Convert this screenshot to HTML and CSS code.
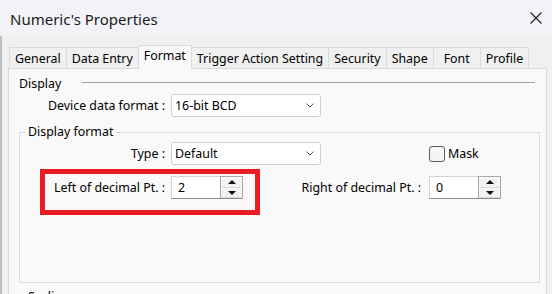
FILE: index.html
```html
<!DOCTYPE html>
<html>
<head>
    <title>Numeric's Properties</title>
    <link rel="stylesheet" href="styles.css">
</head>
<body>
    <div class="titlebar">
        <span class="title">Numeric's Properties</span>
        <svg class="close" width="12" height="12" viewBox="0 0 12 12">
            <path d="M0.5 0.5 L11.5 11.5 M11.5 0.5 L0.5 11.5" stroke="#1a1a1a" stroke-width="1.1" fill="none"/>
        </svg>
    </div>
    <div class="dialog">
        <div class="tabs">
            <div class="tab">General</div>
            <div class="tab">Data Entry</div>
            <div class="tab active">Format</div>
            <div class="tab">Trigger Action Setting</div>
            <div class="tab">Security</div>
            <div class="tab">Shape</div>
            <div class="tab">Font</div>
            <div class="tab">Profile</div>
        </div>
        <div class="panel">
            <div class="section-head">
                <span>Display</span>
                <span class="rule"></span>
            </div>
            <div class="row device-row">
                <label class="lbl">Device data format :</label>
                <div class="select">
                    <span>16-bit BCD</span>
                    <svg width="8" height="5" viewBox="0 0 8 5"><path d="M0.5 0.5 L4 4 L7.5 0.5" stroke="#555" fill="none"/></svg>
                </div>
            </div>
            <fieldset class="group">
                <legend>Display format</legend>
                <div class="row">
                    <label class="lbl">Type :</label>
                    <div class="select">
                        <span>Default</span>
                        <svg width="8" height="5" viewBox="0 0 8 5"><path d="M0.5 0.5 L4 4 L7.5 0.5" stroke="#555" fill="none"/></svg>
                    </div>
                    <div class="check">
                        <span class="box"></span>
                        <span>Mask</span>
                    </div>
                </div>
                <div class="row decimal-row">
                    <label class="lbl">Left of decimal Pt. :</label>
                    <div class="spin">
                        <span class="value">2</span>
                        <div class="spin-btns">
                            <span class="btn"><i class="up"></i></span>
                            <span class="btn"><i class="down"></i></span>
                        </div>
                    </div>
                    <label class="lbl lbl-right">Right of decimal Pt. :</label>
                    <div class="spin">
                        <span class="value">0</span>
                        <div class="spin-btns">
                            <span class="btn"><i class="up"></i></span>
                            <span class="btn"><i class="down"></i></span>
                        </div>
                    </div>
                    <div class="highlight"></div>
                </div>
            </fieldset>
            <div class="section-head scaling">
                <span>Scaling</span>
            </div>
        </div>
    </div>
</body>
</html>
```

FILE: styles.css
```css
body {
    margin: 0;
    padding: 0;
    background-color: #f0f0f0;
    font-family: "Noto Sans", "Open Sans", sans-serif;
    font-size: 12.4px;
    color: #000;
    overflow: hidden;
}
.titlebar {
    height: 36px;
    display: flex;
    align-items: center;
    justify-content: space-between;
    padding: 0 10px;
    background-color: #f3f2f7;
}
.title {
    font-size: 15px;
    color: #1a1a1a;
    margin-top: 1px;
}
.dialog {
    padding: 9px 5px 0 6px;
    border-left: 2px solid #bdbdc4;
}
.tabs {
    display: flex;
    align-items: flex-end;
    padding-left: 2px;
    position: relative;
    z-index: 1;
}
.tab {
    height: 21px;
    line-height: 21px;
    min-width: 48px;
    box-sizing: border-box;
    padding: 0 5px;
    text-align: center;
    border: 1px solid #dadada;
    border-bottom: none;
    margin-left: -1px;
    background-color: #f0f0f0;
}
.tab.active {
    height: 24px;
    line-height: 20px;
    margin-bottom: -1px;
    background-color: #f9f9f9;
}
.panel {
    border: 1px solid #d9d9d9;
    background-color: #f9f9f9;
    height: 260px;
}
.section-head {
    display: flex;
    align-items: center;
    height: 16px;
    margin-top: 6px;
    padding-left: 10px;
    padding-right: 11px;
}
.section-head .rule {
    flex: 1;
    height: 1px;
    margin-left: 21px;
    margin-top: -1px;
    background-color: #a0a0a0;
}
.row {
    display: flex;
    align-items: center;
}
.device-row {
    margin-top: 3px;
    padding-left: 11px;
}
.lbl {
    width: 145px;
    text-align: right;
    margin-right: 6px;
    white-space: nowrap;
}
.select {
    width: 150px;
    height: 23px;
    box-sizing: border-box;
    display: flex;
    align-items: center;
    justify-content: space-between;
    padding: 0 6px 0 3px;
    background-color: #fff;
    border: 1px solid #cfcfcf;
    border-radius: 3px;
}
.group {
    margin: 7px 6px 0 10px;
    padding: 2px 0 83px 0;
    border: 1px solid #dcdcdc;
}
.group legend {
    margin-left: 5px;
    padding: 0 3px;
    line-height: 16px;
}
.check {
    display: flex;
    align-items: center;
    margin-left: 108px;
}
.check .box {
    width: 16px;
    height: 16px;
    box-sizing: border-box;
    border: 1px solid #5a5a5a;
    border-radius: 3px;
    background-color: #f5f5f5;
    margin-right: 3px;
}
.decimal-row {
    margin-top: 11px;
    position: relative;
}
.spin {
    width: 72px;
    height: 23px;
    box-sizing: border-box;
    display: flex;
    background-color: #fff;
    border: 1px solid #d4d4d4;
    border-bottom-color: #8c8c8c;
}
.spin .value {
    flex: 1;
    line-height: 21px;
    padding-left: 6px;
}
.spin-btns {
    width: 21px;
    display: flex;
    flex-direction: column;
    border: 1px solid #a6a6a6;
    border-bottom: none;
    margin-top: -1px;
    margin-right: -1px;
}
.spin-btns .btn {
    flex: 1;
    display: flex;
    align-items: center;
    justify-content: center;
    background-color: #f2f2f2;
    border: 1px solid #fbfbfb;
    border-bottom-color: #d8d8d8;
}
.spin-btns i {
    width: 0;
    height: 0;
    border-left: 4px solid transparent;
    border-right: 4px solid transparent;
}
.spin-btns i.up {
    border-bottom: 4px solid #111;
}
.spin-btns i.down {
    border-top: 4px solid #111;
}
.lbl-right {
    width: 170px;
    margin-left: 8px;
    margin-right: 8px;
}
.highlight {
    position: absolute;
    left: 20px;
    top: -7px;
    width: 220px;
    height: 46px;
    box-sizing: border-box;
    border: 5px solid #ec1c24;
}
.scaling {
    margin-top: 5px;
    padding-left: 19px;
}
```
